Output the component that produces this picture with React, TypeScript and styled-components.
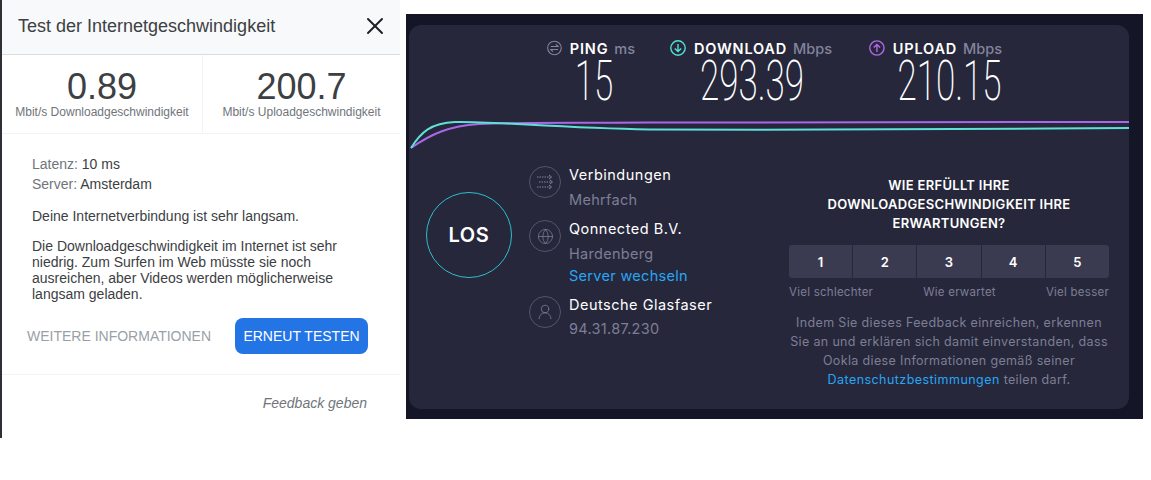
import React from "react";
import styled, { createGlobalStyle } from "styled-components";
import { Globe, UserRound, X } from "lucide-react";

const GlobalStyle = createGlobalStyle`
  html, body {
    margin: 0;
    padding: 0;
    background: #fff;
  }
  * {
    box-sizing: border-box;
  }
`;

const Page = styled.div`
  display: flex;
  align-items: flex-start;
  width: 1151px;
  height: 480px;
  overflow: hidden;
`;

/* left panel: google speed check */
const ResultPanel = styled.section`
  width: 400px;
  height: 438px;
  border-left: 2px solid #2f2f35;
  background: #fff;
  font-family: "Liberation Sans", Arial, sans-serif;
  flex-shrink: 0;
`;

const PanelHeader = styled.header`
  height: 55px;
  padding: 0 11px 2px 16px;
  display: flex;
  align-items: center;
  justify-content: space-between;
  background: #f8f9fa;
  border-bottom: 1px solid #dadce0;
`;

const PanelTitle = styled.h1`
  margin: 0;
  font-size: 18px;
  font-weight: 400;
  color: #3c4043;
`;

const Results = styled.div`
  display: grid;
  grid-template-columns: 200px 1fr;
  height: 79px;
  border-bottom: 1px solid #f1f3f4;
`;

const ResultCell = styled.div<{ $divider?: boolean }>`
  display: flex;
  flex-direction: column;
  align-items: center;
  padding-top: 13px;
  border-left: ${(p) => (p.$divider ? "1px solid #f1f3f4" : "none")};
`;

const ResultValue = styled.div`
  font-size: 36px;
  line-height: 38px;
  color: #3c4043;
`;

const ResultLabel = styled.div`
  margin-top: -1px;
  font-size: 12px;
  line-height: 14px;
  color: #70757a;
`;

const PanelBody = styled.div`
  padding: 20px 32px 0 30px;
  font-size: 14px;
  color: #3c4043;
`;

const MetaLine = styled.div`
  line-height: 20px;
`;

const MetaKey = styled.span`
  color: #70757a;
`;

const Paragraph = styled.p<{ $top: number }>`
  margin: ${(p) => p.$top}px 0 0;
  line-height: 16px;
`;

const Actions = styled.div`
  display: flex;
  align-items: center;
  justify-content: space-between;
  height: 36px;
  margin: 16px 0 0 -5px;
`;

const TextLink = styled.a`
  font-size: 14px;
  color: #9aa0a6;
`;

const RetryButton = styled.button`
  width: 133px;
  height: 36px;
  padding: 0;
  border: 0;
  border-radius: 8px;
  background: #2374e4;
  color: #fff;
  font-family: inherit;
  font-size: 14px;
`;

const PanelFooter = styled.footer`
  margin-top: 20px;
  padding: 20px 33px 0 0;
  border-top: 1px solid #f1f3f4;
  text-align: right;
  font-size: 14px;
  line-height: 16px;
  font-style: italic;
  color: #70757a;
`;

/* right panel: speedtest result */
const SpeedFrame = styled.section`
  width: 737px;
  height: 405px;
  margin: 14px 0 0 6px;
  padding: 11px 14px 10px 3px;
  background: #141526;
  flex-shrink: 0;
  font-family: Inter, "Open Sans", sans-serif;
`;

const SpeedCard = styled.div`
  height: 100%;
  border-radius: 12px;
  background: #26273b;
  overflow: hidden;
`;

const StatsRow = styled.div`
  display: flex;
  height: 89px;
  padding: 14px 0 0 138px;
`;

const Stat = styled.div<{ $width: number; $gap: number }>`
  width: ${(p) => p.$width}px;
  margin-right: ${(p) => p.$gap}px;
`;

const StatHead = styled.div`
  display: flex;
  align-items: center;
  height: 18px;
  font-size: 14.5px;
  white-space: nowrap;
`;

const StatName = styled.span`
  margin-left: 8px;
  font-weight: 600;
  letter-spacing: 0.8px;
  color: #fff;
`;

const StatUnit = styled.span`
  margin-left: 6px;
  font-weight: 500;
  color: #83849b;
`;

const StatNumberBox = styled.div<{ $shift: number }>`
  display: flex;
  align-items: center;
  justify-content: center;
  height: 50px;
  padding-left: ${(p) => p.$shift}px;
`;

/* tall condensed digits: no such font here, so a light face stretched upwards */
const StatNumber = styled.span`
  display: inline-block;
  font-family: Roboto, sans-serif;
  font-weight: 200;
  font-size: 35px;
  line-height: 30px;
  color: #fff;
  white-space: nowrap;
  transform: scaleY(1.6);
`;

const Chart = styled.svg`
  display: block;
  width: 720px;
  height: 40px;
`;

const Lower = styled.div`
  display: flex;
  margin-top: 1px;
`;

const GoColumn = styled.div`
  width: 120px;
  padding: 37px 0 0 17px;
`;

const GoButton = styled.button`
  width: 86px;
  height: 86px;
  padding: 0;
  border: 1px solid #2fbfcb;
  border-radius: 50%;
  background: transparent;
  color: #fff;
  font-family: inherit;
  font-size: 20px;
  font-weight: 600;
  letter-spacing: 0.6px;
`;

const InfoColumn = styled.div`
  width: 260px;
  padding-top: 11px;
`;

const InfoRow = styled.div<{ $height: number }>`
  display: flex;
  height: ${(p) => p.$height}px;
`;

const InfoIcon = styled.div`
  display: flex;
  align-items: center;
  justify-content: center;
  width: 32px;
  height: 32px;
  margin-right: 8px;
  border: 1px solid #54556a;
  border-radius: 50%;
  color: #83849b;
  flex-shrink: 0;
`;

const InfoLine = styled.div<{ $tone: "main" | "sub" | "link"; $height: number }>`
  height: ${(p) => p.$height}px;
  font-size: 14.5px;
  line-height: 18px;
  letter-spacing: ${(p) => (p.$tone === "main" ? "0.5px" : "0.3px")};
  white-space: nowrap;
  color: ${(p) =>
    p.$tone === "main" ? "#fff" : p.$tone === "link" ? "#26a6f5" : "#7d7e95"};
`;

const SurveyColumn = styled.div`
  width: 320px;
  text-align: center;
  padding-top: 21px;
`;

const SurveyTitle = styled.h2`
  width: 320px;
  margin: 0;
  padding: 0 20px;
  font-size: 13px;
  line-height: 19px;
  font-weight: 600;
  letter-spacing: 0.3px;
  color: #fff;
  text-transform: uppercase;
`;

const Scale = styled.div`
  display: grid;
  grid-template-columns: repeat(5, 1fr);
  gap: 1px;
  height: 33px;
  margin-top: 12px;
  border-radius: 3px;
  overflow: hidden;
`;

const ScaleButton = styled.button`
  padding: 0;
  border: 0;
  background: #3a3b50;
  color: #fff;
  font-family: inherit;
  font-size: 13px;
  font-weight: 600;
`;

const ScaleLabels = styled.div`
  display: flex;
  justify-content: space-between;
  margin-top: 7px;
  font-size: 11.5px;
  line-height: 14px;
  letter-spacing: 0.25px;
  color: #7d7e95;
`;

const Notice = styled.p`
  margin: 14px 0 0;
  font-size: 12.5px;
  line-height: 19px;
  letter-spacing: 0.35px;
  color: #7d7e95;
  white-space: nowrap;
`;

const NoticeLink = styled.a`
  color: #26a6f5;
  letter-spacing: 0.45px;
`;

const PingIcon = () => (
  <svg width="16" height="16" viewBox="0 0 16 16" fill="none" stroke="#83849b" strokeWidth="1.2">
    <circle cx="8" cy="8" r="7.3" />
    <path d="M4 6.4h8L9.6 4M12 9.6H4l2.4 2.4" />
  </svg>
);

const ArrowIcon = ({ color, up }: { color: string; up?: boolean }) => (
  <svg width="16" height="16" viewBox="0 0 16 16" fill="none" stroke={color} strokeWidth="1.4">
    <circle cx="8" cy="8" r="7.2" />
    <path
      d={up ? "M8 12V4.5M4.8 7.6 8 4.4l3.2 3.2" : "M8 4v7.5M4.8 8.4 8 11.6l3.2-3.2"}
    />
  </svg>
);

const ConnectionsIcon = () => (
  <svg width="18" height="16" viewBox="0 0 18 16" fill="none" stroke="currentColor" strokeWidth="1">
    <path d="M1 3h13M3 8h12M1 13h13" strokeDasharray="1.5 1" />
    <path d="M13 1l2.5 2L13 5M14 6l2.5 2L14 10M13 11l2.5 2L13 15" />
  </svg>
);

const App = () => {
  return (
    <Page>
      <GlobalStyle />
      <ResultPanel>
        <PanelHeader>
          <PanelTitle>Test der Internetgeschwindigkeit</PanelTitle>
          <X size={28} color="#202124" strokeWidth={1.7} />
        </PanelHeader>
        <Results>
          <ResultCell>
            <ResultValue>0.89</ResultValue>
            <ResultLabel>Mbit/s Downloadgeschwindigkeit</ResultLabel>
          </ResultCell>
          <ResultCell $divider>
            <ResultValue>200.7</ResultValue>
            <ResultLabel>Mbit/s Uploadgeschwindigkeit</ResultLabel>
          </ResultCell>
        </Results>
        <PanelBody>
          <MetaLine>
            <MetaKey>Latenz:</MetaKey> 10 ms
          </MetaLine>
          <MetaLine>
            <MetaKey>Server:</MetaKey> Amsterdam
          </MetaLine>
          <Paragraph $top={14}>Deine Internetverbindung ist sehr langsam.</Paragraph>
          <Paragraph $top={14}>
            Die Downloadgeschwindigkeit im Internet ist sehr
            <br />
            niedrig. Zum Surfen im Web müsste sie noch
            <br />
            ausreichen, aber Videos werden möglicherweise
            <br />
            langsam geladen.
          </Paragraph>
          <Actions>
            <TextLink>WEITERE INFORMATIONEN</TextLink>
            <RetryButton>ERNEUT TESTEN</RetryButton>
          </Actions>
        </PanelBody>
        <PanelFooter>Feedback geben</PanelFooter>
      </ResultPanel>

      <SpeedFrame>
        <SpeedCard>
          <StatsRow>
            <Stat $width={88} $gap={35}>
              <StatHead>
                <PingIcon />
                <StatName>PING</StatName>
                <StatUnit>ms</StatUnit>
              </StatHead>
              <StatNumberBox $shift={6}>
                <StatNumber>15</StatNumber>
              </StatNumberBox>
            </Stat>
            <Stat $width={164} $gap={35}>
              <StatHead>
                <ArrowIcon color="#53e0d4" />
                <StatName>DOWNLOAD</StatName>
                <StatUnit>Mbps</StatUnit>
              </StatHead>
              <StatNumberBox $shift={0}>
                <StatNumber>293.39</StatNumber>
              </StatNumberBox>
            </Stat>
            <Stat $width={133} $gap={0}>
              <StatHead>
                <ArrowIcon color="#b06ae6" up />
                <StatName>UPLOAD</StatName>
                <StatUnit>Mbps</StatUnit>
              </StatHead>
              <StatNumberBox $shift={28}>
                <StatNumber>210.15</StatNumber>
              </StatNumberBox>
            </Stat>
          </StatsRow>
          <Chart viewBox="0 0 720 40" fill="none" strokeWidth="2">
            <path
              d="M2 34C22 20 40 12 70 10C110 8 160 9 240 8.5C400 8 560 8 720 8"
              stroke="#a868e8"
            />
            <path
              d="M2 34C12 18 22 9 46 8C80 7 150 14 240 15.5C400 16.5 560 15 720 14"
              stroke="#5fe0d6"
            />
          </Chart>
          <Lower>
            <GoColumn>
              <GoButton>LOS</GoButton>
            </GoColumn>
            <InfoColumn>
              <InfoRow $height={54}>
                <InfoIcon>
                  <ConnectionsIcon />
                </InfoIcon>
                <div>
                  <InfoLine $tone="main" $height={25}>Verbindungen</InfoLine>
                  <InfoLine $tone="sub" $height={22}>Mehrfach</InfoLine>
                </div>
              </InfoRow>
              <InfoRow $height={76}>
                <InfoIcon>
                  <Globe size={17} strokeWidth={1} />
                </InfoIcon>
                <div>
                  <InfoLine $tone="main" $height={25}>Qonnected B.V.</InfoLine>
                  <InfoLine $tone="sub" $height={22}>Hardenberg</InfoLine>
                  <InfoLine $tone="link" $height={22}>Server wechseln</InfoLine>
                </div>
              </InfoRow>
              <InfoRow $height={54}>
                <InfoIcon>
                  <UserRound size={18} strokeWidth={1} />
                </InfoIcon>
                <div>
                  <InfoLine $tone="main" $height={24}>Deutsche Glasfaser</InfoLine>
                  <InfoLine $tone="sub" $height={22}>94.31.87.230</InfoLine>
                </div>
              </InfoRow>
            </InfoColumn>
            <SurveyColumn>
              <SurveyTitle>
                Wie erfüllt Ihre Downloadgeschwindigkeit Ihre Erwartungen?
              </SurveyTitle>
              <Scale>
                {[1, 2, 3, 4, 5].map((n) => (
                  <ScaleButton key={n}>{n}</ScaleButton>
                ))}
              </Scale>
              <ScaleLabels>
                <span>Viel schlechter</span>
                <span>Wie erwartet</span>
                <span>Viel besser</span>
              </ScaleLabels>
              <Notice>
                Indem Sie dieses Feedback einreichen, erkennen
                <br />
                Sie an und erklären sich damit einverstanden, dass
                <br />
                Ookla diese Informationen gemäß seiner
                <br />
                <NoticeLink>Datenschutzbestimmungen</NoticeLink> teilen darf.
              </Notice>
            </SurveyColumn>
          </Lower>
        </SpeedCard>
      </SpeedFrame>
    </Page>
  );
};

export default App;
